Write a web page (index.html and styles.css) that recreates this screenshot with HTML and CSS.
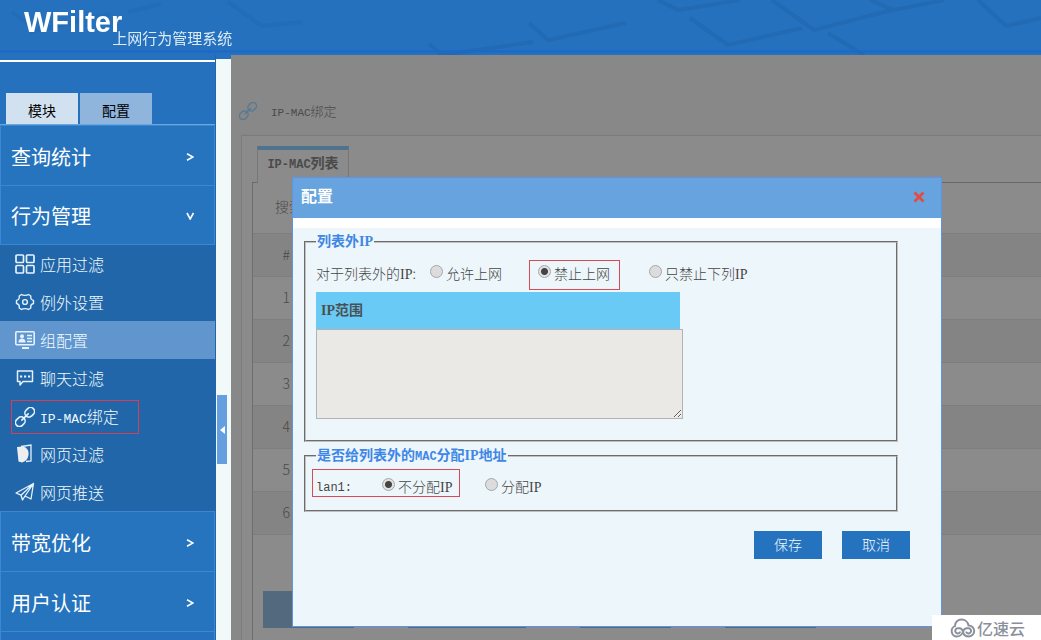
FILE: index.html
```html
<!DOCTYPE html>
<html lang="zh-CN">
<head>
<meta charset="utf-8">
<title>WFilter 上网行为管理系统</title>
<link rel="stylesheet" href="styles.css">
</head>
<body>
<svg class="defs" aria-hidden="true">
  <symbol id="chain" viewBox="0 0 20 20">
    <g transform="rotate(-45 10 10)" fill="none" stroke="currentColor" stroke-width="1.600" stroke-linecap="round">
      <rect x="-1.800" y="6" width="10.300" height="8" rx="4"/>
      <rect x="11.500" y="6" width="10.300" height="8" rx="4"/>
      <path d="M5.500 10h9"/>
    </g>
  </symbol>
</svg>
<header class="banner">
  <svg class="pattern" viewBox="0 0 1041 55" preserveAspectRatio="xMinYMin slice" aria-hidden="true">
    <g fill="none" stroke="#1d5c9f" stroke-width="4" stroke-linejoin="round" opacity=".3">
      <path d="M429 44l13 11 91-13M529 23l19 17 78-17M658 0l20 10 62-10M690 18l38 27 74-17M772 0l42 30 70-18 60-12M870 0l24 10M828 33l36 22M978 0l28 26 35-8"/>
      <path d="M12 12l24 18M128 12l33-8M228 2l34 24 40-4M30 32l80-18" opacity=".6"/>
    </g>
    <path d="M0 51.500h1041" stroke="#1b68cc" stroke-width="2"/>
  </svg>
  <div class="brand"><strong class="logo">WFilter</strong><span class="tagline">上网行为管理系统</span></div>
</header>
<div class="frame">
  <aside class="sidebar">
    <div class="tabs"><button class="tab tab-on">模块</button><button class="tab">配置</button></div>
    <nav>
      <button class="section">查询统计<svg class="chev" viewBox="0 0 8 8"><path d="M1 .8l6 3.200-6 3.200"/></svg></button>
      <button class="section section-open">行为管理<svg class="chev" viewBox="0 0 8 8"><path d="M1 1l3.200 6L7.500 1"/></svg></button>
      <div class="submenu">
        <a class="item" href="#"><svg class="ico" viewBox="0 0 20 20"><g fill="none" stroke="currentColor" stroke-width="1.700"><rect x="1" y="1" width="7.500" height="7.500" rx="1"/><rect x="11.500" y="1" width="7.500" height="7.500" rx="1"/><rect x="1" y="11.500" width="7.500" height="7.500" rx="1"/><rect x="11.500" y="11.500" width="7.500" height="7.500" rx="1"/></g></svg><span>应用过滤</span></a>
        <a class="item" href="#"><svg class="ico" viewBox="0 0 20 20"><g fill="none" stroke="currentColor" stroke-width="1.400" stroke-linejoin="round"><path d="M6.500 2.500c1.500 1.200 5.500 1.200 7 0l2.300 1.500c-.4 2.200.7 4 2.700 4.500v3c-2 .5-3.100 2.300-2.700 4.500l-2.300 1.500c-1.500-1.200-5.500-1.200-7 0L4.200 16c.4-2.200-.7-4-2.700-4.500v-3c2-.5 3.100-2.300 2.700-4.500z"/><circle cx="10" cy="10" r="2.400"/></g></svg><span>例外设置</span></a>
        <a class="item item-on" href="#"><svg class="ico" viewBox="0 0 20 20"><rect x=".8" y="1.800" width="18.400" height="13" rx="1" fill="none" stroke="currentColor" stroke-width="1.600"/><circle cx="7" cy="6.300" r="2" fill="currentColor"/><path d="M3.500 12.500c0-3 1.500-4 3.500-4s3.500 1 3.500 4zM7 17h7v2H7z" fill="currentColor"/><path d="M12 5.500h5M12 8.500h5M12 11.500h5" stroke="currentColor" stroke-width="1.400"/></svg><span>组配置</span></a>
        <a class="item" href="#"><svg class="ico" viewBox="0 0 20 20"><path d="M2.500 3h15v10.500H8L5 17v-3.500H2.500z" fill="none" stroke="currentColor" stroke-width="1.500" stroke-linejoin="round"/><path d="M5 8.500h2.200M9 8.500h2.200M13 8.500h2.200" stroke="currentColor" stroke-width="1.800"/></svg><span>聊天过滤</span></a>
        <a class="item item-marked" href="#"><svg class="ico"><use href="#chain"/></svg><span><span class="latin">IP-MAC</span>绑定</span></a>
        <a class="item" href="#"><svg class="ico" viewBox="0 0 20 20"><path d="M6 2.500l10-1.500v16l-5 .5" fill="none" stroke="currentColor" stroke-width="1.300"/><path d="M2 3l6-.5c4 1 6 4 5.500 8.500-.5 4-3 6.500-6.500 7.500l-3.500-1z" fill="#eeeef0"/></svg><span>网页过滤</span></a>
        <a class="item" href="#"><svg class="ico" viewBox="0 0 20 20"><path d="M18.500 1.500L1 11l5 2.200zM18.500 1.500L16 17l-6-3zM6 13.200L7.500 18l2.500-4 8.500-12.500" fill="none" stroke="currentColor" stroke-width="1.300" stroke-linejoin="round"/></svg><span>网页推送</span></a>
      </div>
      <button class="section">带宽优化<svg class="chev" viewBox="0 0 8 8"><path d="M1 .8l6 3.200-6 3.200"/></svg></button>
      <button class="section">用户认证<svg class="chev" viewBox="0 0 8 8"><path d="M1 .8l6 3.200-6 3.200"/></svg></button>
      <div class="nav-end"></div>
    </nav>
  </aside>
  <div class="gutter"><button class="handle" aria-label="收起"><svg viewBox="0 0 10 10"><path d="M8 1v8L3 5z" fill="#fff"/></svg></button></div>
  <main class="main">
    <h1 class="title"><svg class="title-icon"><use href="#chain"/></svg><span><span class="latin">IP-MAC</span>绑定</span></h1>
    <section class="panel">
      <div class="panel-tabs"><button class="panel-tab"><span class="latin">IP-MAC</span>列表</button></div>
      <div class="panel-body">
        <label class="search" for="q">搜索</label><input class="search-box" id="q" type="text">
        <table class="list">
          <thead><tr><th class="num">#</th><th></th><th></th></tr></thead>
          <tbody>
            <tr><td class="num">1</td><td></td><td></td></tr>
            <tr><td class="num">2</td><td></td><td></td></tr>
            <tr><td class="num">3</td><td></td><td></td></tr>
            <tr><td class="num">4</td><td></td><td></td></tr>
            <tr><td class="num">5</td><td></td><td></td></tr>
            <tr><td class="num">6</td><td></td><td></td></tr>
          </tbody>
        </table>
        <div class="actions"><span class="act act-s"></span><span class="act act-l"></span><span class="act act-s"></span><span class="act act-s"></span></div>
      </div>
    </section>
  </main>
</div>

<form class="dialog" role="dialog" aria-labelledby="dlg">
  <div class="dialog-head"><h2 id="dlg" class="dialog-title">配置</h2><button class="close" type="button" aria-label="关闭"><svg viewBox="0 0 12 12"><path d="M1.500 1.500l9 9M10.500 1.500l-9 9" stroke="#e8493c" stroke-width="2.600"/></svg></button></div>
  <div class="dialog-body">
    <fieldset class="group group-ip">
      <legend class="legend">列表外<span class="ip">IP</span></legend>
      <div class="row">
        <span class="prompt">对于列表外的<span class="ip">IP</span>:</span>
        <label class="choice"><input class="radio" type="radio" name="out"><span>允许上网</span></label>
        <label class="choice marked marked-a"><input class="radio" type="radio" name="out" checked><span>禁止上网</span></label>
        <label class="choice"><input class="radio" type="radio" name="out"><span>只禁止下列<span class="ip">IP</span></span></label>
      </div>
      <label class="range-head" for="range"><span><span class="ip">IP</span>范围</span></label>
      <textarea class="range" id="range"></textarea>
    </fieldset>
    <fieldset class="group group-mac">
      <legend class="legend">是否给列表外的<span class="latin">MAC</span>分配<span class="ip">IP</span>地址</legend>
      <div class="row">
        <div class="marked marked-b"><span class="lan latin">lan1:</span><label class="choice"><input class="radio" type="radio" name="mac" checked><span>不分配<span class="ip">IP</span></span></label></div>
        <label class="choice"><input class="radio" type="radio" name="mac"><span>分配<span class="ip">IP</span></span></label>
      </div>
    </fieldset>
    <div class="buttons"><button class="btn" type="button">保存</button><button class="btn" type="button">取消</button></div>
  </div>
</form>
<div class="watermark"><svg viewBox="0 0 26 20"><g fill="none" stroke="#8b8f9b" stroke-width="1.900" stroke-linecap="round"><path d="M5 8C5 4 8 1.500 11.500 1.500S18 4 18.500 7.500a5.500 5.500 0 1 1 .5 11c-3.500 0-5.500-2-6-4.500-.5-2.800-2.500-4-4.500-3.700a2.600 2.600 0 1 0 1.500 4"/><path d="M5 8a5.500 5.500 0 0 0 1.500 10.500c3.500 0 5.500-2 6.500-4.500.8-2.800 2.800-4 4.800-3.700a2.600 2.600 0 1 1-1.500 4"/></g></svg>亿速云</div>
</body>
</html>
```
FILE: styles.css
```css
* { box-sizing: border-box; }
body {
  margin: 0;
  height: 100vh;
  overflow: hidden;
  position: relative;
  display: flex;
  flex-direction: column;
  background: #2571bd;
  font: 14px/20px "Noto Sans CJK SC", sans-serif;
  font-weight: 300;
}
button { font: inherit; border: 0; padding: 0; border-radius: 0; }
.defs { position: absolute; width: 0; height: 0; }
.latin { font-family: "Liberation Mono", monospace; font-size: 12px; line-height: 16px; }
.ip { font-family: "Liberation Serif", serif; font-size: 14px; line-height: 16px; }

.banner { position: relative; flex: none; height: 55px; overflow: hidden; }
.pattern { position: absolute; inset: 0; width: 100%; height: 55px; }
.brand { position: relative; display: flex; padding: 6px 0 0 24px; color: #fff; }
.logo { font: bold 29px/33px "Liberation Sans", Arial, sans-serif; }
.tagline { margin: 21px 0 0 -10px; font-size: 15px; line-height: 22px; font-weight: 400; color: #dcebf8; white-space: nowrap; }

.frame { flex: 1; min-height: 0; display: flex; }
.sidebar { flex: none; width: 216px; padding-top: 5px; border-right: 1px solid #2166ac; }
.tabs { display: flex; gap: 2px; padding: 31px 0 0 6px; border-top: 2px solid #fff; border-bottom: 1px solid #6ba6df; }
.tab { width: 72px; height: 31px; padding-top: 2px; background: #8fb5dc; color: #000; font-weight: 400; }
.tab-on { background: #d2e1f0; }
.section {
  display: flex; align-items: center; justify-content: space-between;
  width: 100%; height: 60px; padding: 2px 20px 0 10px;
  border: 1px solid #3c87d2; border-bottom: 0;
  background: #2673be; color: #fff; font-size: 20px; font-weight: 400;
}
.section-open { border-bottom: 1px solid #3c87d2; }
.nav-end { height: 20px; border: 1px solid #3c87d2; }
.chev { width: 8px; height: 8px; fill: none; stroke: #fff; stroke-width: 1.6; }
.submenu { background: #2166a8; }
.item { display: flex; align-items: center; gap: 5px; height: 38px; padding-left: 15px; font-size: 16px; color: #effaff; text-decoration: none; }
.item .latin { font-size: 13px; }
.item-on { background: #6096cd; }
.item-marked { height: 34px; width: 128px; margin: 3px 0 1px 11px; padding-left: 3px; border: 1px solid #d43f55; }
.ico { width: 20px; height: 20px; flex: none; color: #e4f2ff; }

.gutter { flex: none; width: 15px; margin-top: 4px; padding: 336px 0 0 1px; background: #f1faf8; }
.handle { display: flex; align-items: center; width: 10px; height: 69px; background: #659fdf; }

.main { flex: 1; min-width: 0; overflow: hidden; background: #888; color: #4a4a4a; display: flex; flex-direction: column; padding-left: 8px; }
.title { display: flex; align-items: center; gap: 14px; margin: 0; padding-top: 33px; height: 80px; font-size: 13px; font-weight: 300; border-bottom: 1px solid #828688; }
.title .latin { font-size: 11px; }
.title-icon { width: 18px; height: 18px; color: #587893; }
.panel { flex: 1; padding: 10px 0 0 10px; border-left: 1px solid #7c7c7c; margin-left: 2px; background: #8b8b8b; border-top: 1px solid #7c7c7c; }
.panel-tabs { height: 37px; padding-left: 5px; border-bottom: 1px solid #696969; }
.panel-tab { height: 37px; width: 92px; padding: 0 0 8px; border: 1px solid #777; border-top: 4px solid #4f738c; border-bottom: 0; background: #8b8b8b; color: #4a4a4a; font-weight: 700; }
.panel-body { border-left: 1px solid #6e6e6e; height: 100%; }
.search { display: inline-block; padding: 13px 8px 0 22px; height: 50px; }
.search-box { width: 150px; border: 1px solid #777; background: #8b8b8b; }
.list { width: 100%; border-collapse: collapse; table-layout: fixed; }
.list tr { height: 43px; border-top: 1px solid #7e7e7e; }
.list thead tr, .list tbody tr:nth-child(even) { background: #848484; }
.list tbody tr:last-child { border-bottom: 1px solid #7e7e7e; }
.num { width: 38px; padding: 0 1px 2px 0; text-align: right; font-weight: 300; }
.actions { display: flex; gap: 54px; padding: 56px 0 0 10px; }
.act { height: 37px; background: #536a7e; }
.act-s { width: 91px; }
.act-l { width: 118px; }

.dialog {
  position: absolute; top: 177px; left: 292px; right: 99px; min-height: 450px;
  border: 1px solid #5f94e0; background: #edf6fa; color: #454545;
}
.dialog-head { display: flex; align-items: center; justify-content: space-between; height: 40px; padding: 0 16px 3px 8px; background: #67a3de; }
.dialog-title { margin: 0; padding-bottom: 3px; font-size: 16px; line-height: 20px; font-weight: 700; color: #fff; }
.close { display: flex; width: 12px; height: 12px; background: none; }
.dialog-body { padding: 4px 43px 0 11px; border-top: 10px solid #fff; }
.group { margin: 0 0 4px; min-width: 0; border: 2px groove #c0c0c0; }
.group-ip { padding: 8px 10px 21px; }
.group-mac { padding: 3px 6px 13px; }
.group-mac .legend { margin-left: 4px; }
.legend { height: 20px; padding: 0 1px; line-height: 16px; font-weight: 700; color: #3f87e6; }
.row { display: flex; align-items: center; white-space: nowrap; }
.group-ip .row { height: 30px; margin-bottom: 2px; }
.prompt { width: 114px; padding-bottom: 4px; }
.choice { display: flex; align-items: center; gap: 3px; }
.group-ip .choice { padding-bottom: 4px; }
.radio {
  appearance: none; flex: none; width: 13px; height: 13px; margin: 0 0 4px;
  border: 1px solid #a5a8aa; border-radius: 50%; background: #dcdcdc;
}
.radio:checked { background: radial-gradient(circle, #444 0 3px, #e2e2e2 4px); }
.marked { border: 1px solid #d94a59; }
.marked-a { height: 30px; width: 91px; margin: 0 29px 0 27px; padding-left: 8px; }
.marked-b { display: flex; align-items: center; height: 28px; width: 148px; margin-right: 25px; padding: 6px 0 0 3px; }
.group-mac .row > .choice { padding-top: 6px; }
.lan { width: 66px; padding-top: 3px; }
.range-head { display: flex; align-items: center; width: 364px; height: 37px; padding: 0 0 3px 5px; background: #69cbf5; font-weight: 700; color: #4a5052; }
.range { display: block; width: 367px; height: 90px; margin: 0; border: 1px solid #b3b3b3; background: #eae9e5; }
.buttons { display: flex; justify-content: flex-end; gap: 20px; margin: 19px -12px 0 0; }
.btn { width: 68px; height: 28px; padding-bottom: 2px; background: #2573be; color: #effaff; }

.watermark { position: absolute; right: 0; bottom: 0; display: flex; align-items: center; gap: 1px; width: 109px; height: 25px; padding-left: 18px; background: #fff; color: #8b8f9b; font-size: 16px; font-weight: 500; }
.watermark svg { width: 26px; height: 20px; }
```
